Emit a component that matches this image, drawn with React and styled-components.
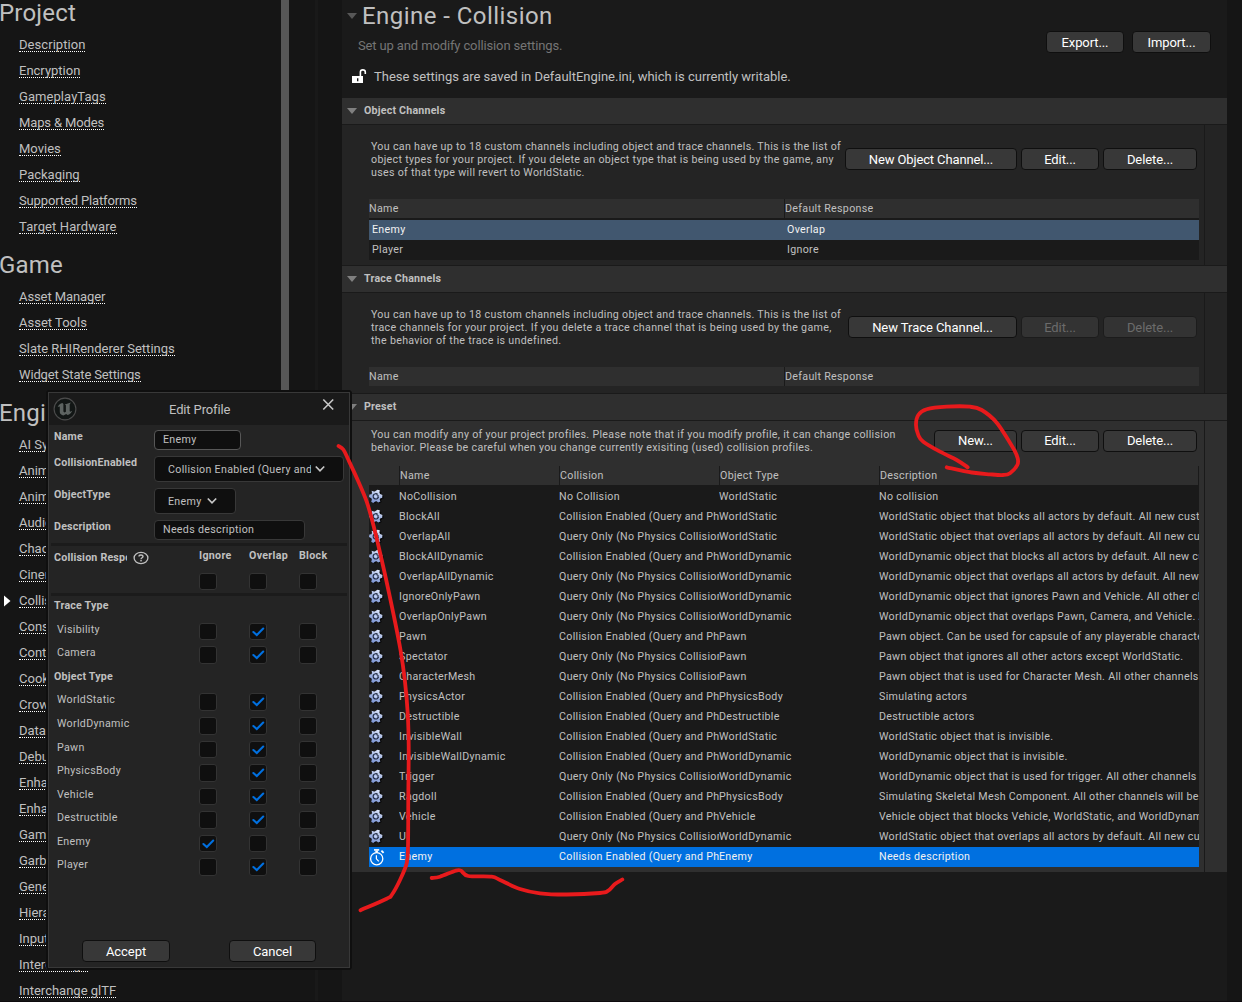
import React from "react";
import styled, { createGlobalStyle, css } from "styled-components";

const Global = createGlobalStyle`
  * { box-sizing: border-box; }
  body {
    margin: 0;
    background: #151515;
    color: #c0c0c0;
    font-family: Roboto, "Liberation Sans", sans-serif;
    font-size: 11px;
    line-height: 13px;
    overflow: hidden;
  }
`;

const regular = css`
  font-size: 13px;
  line-height: 15px;
  letter-spacing: ${(p) => p.$track || 0}px;
`;
const small = css`
  font-size: 10.67px;
  line-height: 13px;
  letter-spacing: 0.31px;
`;
const smallBold = css`
  font-size: 10.67px;
  line-height: 13px;
  letter-spacing: 0.2px;
  font-weight: 700;
`;
const heading = css`
  font-size: 24px;
  line-height: 28px;
  font-weight: 400;
`;

/* ---------- shell ---------- */
const Page = styled.div`
  position: relative;
  display: flex;
  width: 1242px;
  height: 1002px;
  overflow: hidden;
  border-bottom: 1px solid #0e0b0e;
`;
const Sidebar = styled.nav`
  display: flex;
  width: 318px;
  flex: none;
  border-right: 3px solid #191919;
`;
const SideList = styled.div`
  width: 281px;
  height: 1001px;
  overflow: hidden;
`;
const ScrollThumb = styled.div`
  width: 8px;
  height: 420px;
  background: #575757;
`;
const SideHeading = styled.h2`
  ${heading}
  height: 44px;
  margin: ${(p) => (p.$first ? "-12px" : "0")} 0 0 -1px;
  padding-top: 11px;
  letter-spacing: 0.2px;
`;
const SideItem = styled.div`
  display: flex;
  height: 26px;
  padding: 5px 0 0 19px;
`;
const SideLink = styled.a`
  ${regular}
  height: 15px;
  white-space: nowrap;
  border-bottom: 1px dotted #fff;
`;
const Pointer = styled.svg`
  width: 7px;
  height: 12px;
  margin: 2px 8px 0 -15px;
`;

/* ---------- main ---------- */
const Main = styled.main`
  width: 885px;
  margin-left: 24px;
  background: #1a1a1a;
`;
const MainHead = styled.header`
  display: flex;
  height: 98px;
  padding-right: 16px;
`;
const HeadText = styled.div`
  flex: 1;
`;
const TitleRow = styled.div`
  display: flex;
  align-items: flex-start;
  padding: 2px 0 0 5px;
`;
const Title = styled.h1`
  ${heading}
  margin: 0 0 0 5px;
  letter-spacing: 0.45px;
`;
const Arrow = styled.svg`
  width: 10px;
  height: 6px;
  flex: none;
  margin-top: ${(p) => p.$top}px;
`;
const Subtitle = styled.p`
  ${regular}
  margin: 8px 0 0 16px;
  color: #757575;
`;
const SavedRow = styled.div`
  ${regular}
  display: flex;
  align-items: flex-start;
  gap: 7px;
  padding: 16px 0 0 10px;
`;
const HeadButtons = styled.div`
  display: flex;
  gap: 8px;
  padding-top: 31px;
`;
const Button = styled.button`
  ${regular}
  width: ${(p) => p.$w}px;
  height: 22px;
  padding: 0 0 ${(p) => (p.$lift ? 2 : 0)}px;
  font-family: inherit;
  text-align: center;
  color: ${(p) => (p.$off ? "#6b6b6b" : "#fff")};
  background: ${(p) => (p.$off ? "#333" : "#383838")};
  border: 1px solid ${(p) => (p.$off ? "#1c1c1c" : "#0f0f0f")};
  border-radius: 4px;
`;

const SectionBar = styled.div`
  display: flex;
  height: ${(p) => (p.$first ? 27 : 28)}px;
  padding-left: 5px;
  background: #2f2f2f;
  border-bottom: 1px solid #1a1a1a;
  border-top: ${(p) => (p.$first ? "none" : "1px solid #1a1a1a")};
`;
const SectionTitle = styled.h3`
  ${smallBold}
  margin: 6px 0 0 7px;
`;
const SectionBody = styled.div`
  display: flex;
  height: ${(p) => p.$h}px;
  background: ${(p) => (p.$light ? "#2f2f2f" : "#242424")};
`;
const SectionContent = styled.div`
  width: 863px;
  padding-left: 27px;
  border-right: 1px solid #1a1a1a;
`;
const Intro = styled.div`
  display: flex;
  align-items: flex-start;
  height: ${(p) => p.$h}px;
  padding: ${(p) => p.$top}px 7px 0 2px;
`;
const IntroText = styled.p`
  ${small}
  flex: 1 1 0;
  min-width: 0;
  margin: 0;
  white-space: pre;
`;
const IntroButtons = styled.div`
  display: flex;
  flex: none;
  gap: 4px;
  margin-top: ${(p) => p.$top}px;
`;

const Table = styled.div`
  width: 830px;
  background: #1a1a1a;
`;
const HeadRow = styled.div`
  display: flex;
  gap: ${(p) => p.$gap}px;
  height: 19px;
  margin-bottom: 2px;
  background: ${(p) => (p.$gap ? "#1a1a1a" : "#2f2f2f")};
`;
const HeadCell = styled.div`
  ${small}
  flex: ${(p) => (p.$w ? `0 0 ${p.$w}px` : "1")};
  padding-top: 3px;
  background: #2f2f2f;
  ${(p) => p.$line && "border-left: 1px solid #1a1a1a;"}
  ${(p) => p.$last && "border-right: 1px solid #1a1a1a;"}
`;
const Row = styled.div`
  display: flex;
  height: 20px;
  color: ${(p) => (p.$bg ? "#f2f2f2" : "#c0c0c0")};
  background: ${(p) => p.$bg || "#1a1a1a"};
`;
const Cell = styled.div`
  ${small}
  flex: 0 0 ${(p) => p.$w}px;
  padding: 3px 0 0 ${(p) => p.$indent || 0}px;
  overflow: hidden;
  white-space: nowrap;
`;
const IconCell = styled.div`
  width: 30px;
  flex: none;
`;

/* ---------- dialog ---------- */
const Dialog = styled.section`
  position: absolute;
  left: 46px;
  top: 390px;
  width: 306px;
  height: 580px;
  padding: 1px;
  border: 1px solid #0f0f0f;
  background: #0f0f0f;
  border-radius: 3px;
`;
const DialogFrame = styled.div`
  display: flex;
  flex-direction: column;
  width: 302px;
  height: 576px;
  border: 1px solid #383838;
  background: #242424;
`;
const DialogTitle = styled.div`
  display: grid;
  grid-template-columns: 24px 1fr 13px;
  height: 32px;
  padding: 4px 14px 0 4px;
  background: #1a1a1a;
`;
const DialogName = styled.div`
  ${regular}
  padding: 5px 0 0 92px;
`;
const Form = styled.div`
  display: flex;
  flex-direction: column;
  gap: 6px;
  padding: 5px 0 3px 5px;
`;
const Field = styled.div`
  display: flex;
  align-items: flex-start;
`;
const Label = styled.div`
  ${smallBold}
  width: ${(p) => p.$w || 100}px;
  overflow: hidden;
  white-space: nowrap;
`;
const Input = styled.div`
  ${small}
  width: ${(p) => p.$w}px;
  height: 20px;
  padding: 2px 8px;
  background: #0f0f0f;
  border: 1px solid ${(p) => (p.$focus ? "#575757" : "#383838")};
  border-radius: 4px;
`;
const Combo = styled.div`
  ${small}
  display: flex;
  align-items: flex-start;
  gap: 4px;
  width: ${(p) => p.$w}px;
  height: 26px;
  padding: 6px 0 0 13px;
  background: #0f0f0f;
  border: 1px solid #383838;
  border-radius: 4px;
  white-space: nowrap;
`;
const ComboText = styled.span`
  width: ${(p) => p.$w}px;
  overflow: hidden;
`;
const Separator = styled.hr`
  width: 296px;
  height: 3px;
  margin: 0 2px;
  border: 0;
  background: #1b1b1b;
  flex: none;
`;
const Responses = styled.div`
  display: grid;
  grid-template-columns: 145px 50px 50px 50px;
  grid-template-rows: 27px 20px;
  height: 47px;
  padding-left: 5px;
`;
const ResponseLabel = styled.div`
  display: flex;
  gap: 6px;
  padding-top: 5px;
`;
const ColumnName = styled.div`
  ${smallBold}
  letter-spacing: 0.3px;
  padding-top: 3px;
`;
const Group = styled.div`
  ${smallBold}
  height: 23px;
  padding: ${(p) => p.$top}px 0 0 5px;
`;
const ChannelRow = styled.div`
  display: grid;
  grid-template-columns: 142px 50px 50px 50px;
  height: ${(p) => p.$h}px;
  padding: 4px 0 0 8px;
`;
const ChannelName = styled.div`
  ${small}
`;
const Check = styled.div`
  width: 18px;
  height: ${(p) => p.$h}px;
  background: #0f0f0f;
  border: 1px solid #333;
  border-radius: 3px;
`;
const DialogButtons = styled.div`
  display: flex;
  gap: 59px;
  margin-top: auto;
  padding: 0 0 5px 33px;
`;
const Ink = styled.svg`
  position: absolute;
  left: 0;
  top: 0;
  pointer-events: none;
`;
const Glyph = styled.svg`
  display: block;
  flex: none;
  margin-top: ${(p) => p.$top || 0}px;
`;

/* ---------- icons ---------- */
const DownArrow = ({ top, color = "#808080" }) => (
  <Arrow $top={top} viewBox="0 0 10 6">
    <path d="M0 0H10L5 6Z" fill={color} />
  </Arrow>
);

const LockIcon = () => (
  <Glyph width="15" height="15" viewBox="0 0 15 15">
    <path fillRule="evenodd" fill="#fff" d="M0 7H11V14H0Z M5 9.2V12.2H6.4V9.2Z" />
    <path d="M8.4 7.4V3Q8.4 0.9 10.8 0.9T13.3 3V5" fill="none" stroke="#fff" strokeWidth="1.6" />
  </Glyph>
);

const TEETH = [0, 60, 120, 180, 240, 300];
const GearIcon = () => (
  <Glyph width="16" height="18" viewBox="0 0 16 18">
    <defs>
      <linearGradient id="steel" gradientUnits="userSpaceOnUse" x1="3" y1="-6" x2="-2" y2="6">
        <stop offset="0" stopColor="#dfe8fc" />
        <stop offset="0.5" stopColor="#a3b6e2" />
        <stop offset="1" stopColor="#8098d6" />
      </linearGradient>
    </defs>
    <g transform="translate(8.2 10.4)" fill="#080808">
      {TEETH.map((a) => (
        <rect key={a} x="-1.5" y="-6.4" width="3" height="4" rx="0.6" transform={`rotate(${a + 28})`} />
      ))}
      <circle r="4.9" />
    </g>
    <g transform="translate(6.8 9.4)">
      <path
        fill="url(#steel)"
        d="M-4.2 -5.6L-1.9 -4.9L-1 -4.9L1.6 -6.7L4 -6.2L3.6 -3.6L4.4 -2.4L6.6 -1.4L6.4 1.3L4.4 2L3.9 3.2L4.6 5.2L2.4 6.2L0.8 4.9L-0.6 5L-2.6 6.6L-4.6 5.4L-3.9 3L-4.5 1.8L-6.8 0.6L-6.4 -1.8L-4.3 -2.2L-3.8 -3.3Z"
      />
      <path d="M1.9 -2A2.7 2.7 0 1 0 2.7 0.4" fill="none" stroke="#1f2940" strokeWidth="1.1" />
      <path d="M0.6 -1.6L2.6 -0.8L1.8 1.2" fill="none" stroke="#1f2940" strokeWidth="0.9" />
      <circle cx="-0.2" cy="0.2" r="1.2" fill="#c4d2f5" />
    </g>
  </Glyph>
);

const StopwatchIcon = () => (
  <Glyph width="17" height="20" viewBox="0 0 17 20">
    <g fill="none" stroke="#fff">
      <circle cx="7.7" cy="11.7" r="6.1" strokeWidth="1.3" />
      <path d="M7.4 8.2V11.8L9.8 14.4" strokeWidth="1.2" />
      <path d="M5 2.9H10.2" strokeWidth="1.6" />
      <path d="M7.6 3.5V5.4" strokeWidth="2.6" />
      <path d="M12.4 3.6L14.6 5.8" strokeWidth="1.9" />
    </g>
  </Glyph>
);

const UnrealLogo = () => (
  <Glyph width="24" height="24" viewBox="0 0 24 24">
    <circle cx="12" cy="12" r="10.9" fill="#121615" stroke="#4c4c4c" strokeWidth="1.1" />
    <path
      fill="#5d6361"
      d="M4.6 10.3C5.4 8.2 7.2 6.6 9.4 6.1L10.4 7V14.6L11.4 15.6L12.9 14.8V8.3L11.8 7.6L15.6 6.3L17.8 5.6L16.7 7.6V14.2L17.4 14.8L19.2 13.7C18.4 16 16.6 17.6 14.6 18.1L13.2 16.9L10.4 18.4C8.4 18 7 16.9 6.8 15.2V9.7C6 9.2 5.3 9.6 4.6 10.3Z"
    />
  </Glyph>
);

const CloseIcon = () => (
  <Glyph $top={1} width="13" height="13" viewBox="0 0 13 13">
    <path d="M1.3 1.5L11.2 11.5M11.2 1.5L1.3 11.5" stroke="#c8c8c8" strokeWidth="1.6" fill="none" />
  </Glyph>
);

const Chevron = () => (
  <Glyph $top={2} width="11" height="8" viewBox="0 0 11 8">
    <path d="M0.8 1.5L5 5.8L9.2 1.5" stroke="#c8c8c8" strokeWidth="1.7" fill="none" />
  </Glyph>
);

const HelpIcon = () => (
  <Glyph width="16" height="14" viewBox="0 0 16 14">
    <ellipse cx="8" cy="7" rx="6.9" ry="5.6" fill="none" stroke="#c0c0c0" strokeWidth="1.3" />
    <path d="M6 5.6C6 3.4 10 3.4 10 5.5C10 6.8 8 6.7 8 8.2" fill="none" stroke="#c0c0c0" strokeWidth="1.4" />
    <rect x="7.3" y="9" width="1.5" height="1.4" fill="#c0c0c0" />
  </Glyph>
);

const CheckBox = ({ on, h }) => (
  <Check $h={h}>
    {on && (
      <Glyph width="16" height="15" viewBox="0 0 16 15">
        <path d="M3.4 8L6.8 11L13.2 4.6" fill="none" stroke="#0070e0" strokeWidth="2.1" strokeLinecap="round" />
      </Glyph>
    )}
  </Check>
);

/* ---------- data ---------- */
const MENU = [
  ["Project", ["Description", "Encryption", "GameplayTags", "Maps & Modes", "Movies", "Packaging", "Supported Platforms", "Target Hardware"]],
  ["Game", ["Asset Manager", "Asset Tools", "Slate RHIRenderer Settings", "Widget State Settings"]],
  ["Engine", [
    "AI System", "Animation", "Animation Modifiers", "Audio", "Chaos Solver", "Cinematic Camera", "Collision",
    "Console", "Control Rig", "Cooker", "Crowd Manager", "Data Driven CVars", "Debug Camera Controller",
    "Enhanced Input", "Enhanced Input (Editor Only)", "Gameplay Debugger", "Garbage Collection",
    "General Settings", "Hierarchical LOD", "Input", "Interchange", "Interchange glTF",
  ]],
];
const TRACKING = {
  Description: 0.06,
  GameplayTags: 0.07,
  "Maps & Modes": -0.14,
  "Supported Platforms": -0.14,
  "Target Hardware": 0.1,
  "Asset Manager": -0.1,
  "Widget State Settings": -0.14,
};

const CE = "Collision Enabled (Query and Physics)";
const QO = "Query Only (No Physics Collision)";
const PRESETS = [
  ["NoCollision", "No Collision", "WorldStatic", "No collision"],
  ["BlockAll", CE, "WorldStatic", "WorldStatic object that blocks all actors by default. All new custom channels"],
  ["OverlapAll", QO, "WorldStatic", "WorldStatic object that overlaps all actors by default. All new custom channels"],
  ["BlockAllDynamic", CE, "WorldDynamic", "WorldDynamic object that blocks all actors by default. All new custom channels"],
  ["OverlapAllDynamic", QO, "WorldDynamic", "WorldDynamic object that overlaps all actors by default. All new custom channels"],
  ["IgnoreOnlyPawn", QO, "WorldDynamic", "WorldDynamic object that ignores Pawn and Vehicle. All other channels"],
  ["OverlapOnlyPawn", QO, "WorldDynamic", "WorldDynamic object that overlaps Pawn, Camera, and Vehicle. All other channels"],
  ["Pawn", CE, "Pawn", "Pawn object. Can be used for capsule of any playerable characters or AI."],
  ["Spectator", QO, "Pawn", "Pawn object that ignores all other actors except WorldStatic."],
  ["CharacterMesh", QO, "Pawn", "Pawn object that is used for Character Mesh. All other channels will be set"],
  ["PhysicsActor", CE, "PhysicsBody", "Simulating actors"],
  ["Destructible", CE, "Destructible", "Destructible actors"],
  ["InvisibleWall", CE, "WorldStatic", "WorldStatic object that is invisible."],
  ["InvisibleWallDynamic", CE, "WorldDynamic", "WorldDynamic object that is invisible."],
  ["Trigger", QO, "WorldDynamic", "WorldDynamic object that is used for trigger. All other channels will be set"],
  ["Ragdoll", CE, "PhysicsBody", "Simulating Skeletal Mesh Component. All other channels will be set"],
  ["Vehicle", CE, "Vehicle", "Vehicle object that blocks Vehicle, WorldStatic, and WorldDynamic."],
  ["UI", QO, "WorldDynamic", "WorldStatic object that overlaps all actors by default. All new custom channels"],
  ["Enemy", CE, "Enemy", "Needs description"],
];

// name, checked column, row height, box height
const TRACE = [
  ["Visibility", 1, 23, 17],
  ["Camera", 1, 24, 18],
];
const OBJECTS = [
  ["WorldStatic", 1, 24, 18],
  ["WorldDynamic", 1, 24, 18],
  ["Pawn", 1, 23, 17],
  ["PhysicsBody", 1, 24, 18],
  ["Vehicle", 1, 23, 17],
  ["Destructible", 1, 24, 18],
  ["Enemy", 0, 23, 17],
  ["Player", 1, 24, 18],
];

const STROKES = [
  [[946.7, 467.3], [971.7, 472.5], [990, 474.3], [1003, 475], [1010, 473.3], [1017.3, 465], [1017.7, 458.3], [1013.3, 448.3], [996.7, 422.7], [981.7, 410], [970, 406.7], [946.7, 406.7], [926.7, 409.3], [918.3, 415], [916, 425], [918.3, 435], [923.3, 441.7], [940, 451.7], [956.7, 460], [967.7, 467.3]],
  [[338.5, 446], [343.3, 449.5], [348.5, 460], [357.7, 480], [366.7, 501.7], [373.8, 526.7], [384, 570], [394, 616.7], [400.5, 650], [404.8, 680], [407.7, 713], [408.7, 746.7], [408.3, 796.7], [408, 846.7], [406.7, 863.3], [400, 880], [391.7, 895], [386.7, 898.7], [360.5, 910.3]],
  [[431.7, 878], [440, 876.7], [456, 870.6], [461, 870.8], [468.3, 876], [491.7, 876.7], [500, 880], [520, 889], [540, 893.3], [566.7, 894.5], [600, 893], [608.3, 890.7], [615, 884], [622.3, 879.5]],
];

function smooth(pts) {
  let d = `M${pts[0][0]} ${pts[0][1]}`;
  for (let i = 0; i < pts.length - 1; i++) {
    const a = pts[i - 1] || pts[i];
    const b = pts[i];
    const c = pts[i + 1];
    const e = pts[i + 2] || c;
    d += `C${b[0] + (c[0] - a[0]) / 6} ${b[1] + (c[1] - a[1]) / 6} ${c[0] - (e[0] - b[0]) / 6} ${c[1] - (e[1] - b[1]) / 6} ${c[0]} ${c[1]}`;
  }
  return d;
}

/* ---------- parts ---------- */
const Section = ({ title, first, light, h, children }) => (
  <>
    <SectionBar $first={first}>
      <DownArrow top={10} />
      <SectionTitle>{title}</SectionTitle>
    </SectionBar>
    <SectionBody $h={h} $light={light}>
      <SectionContent>{children}</SectionContent>
    </SectionBody>
  </>
);

const ChannelTable = ({ rows }) => (
  <Table>
    <HeadRow $gap={1}>
      <HeadCell $w={415}>Name</HeadCell>
      <HeadCell>Default Response</HeadCell>
    </HeadRow>
    {rows.map(([name, response, bg]) => (
      <Row key={name} $bg={bg}>
        <Cell $w={415} $indent={3}>{name}</Cell>
        <Cell $w={415} $indent={3}>{response}</Cell>
      </Row>
    ))}
  </Table>
);

const Channels = ({ rows }) =>
  rows.map(([name, on, h, box]) => (
    <ChannelRow key={name} $h={h}>
      <ChannelName>{name}</ChannelName>
      {[0, 1, 2].map((c) => (
        <CheckBox key={c} on={c === on} h={box} />
      ))}
    </ChannelRow>
  ));

export default function App() {
  return (
    <Page>
      <Global />
      <Sidebar>
        <SideList>
          {MENU.map(([group, items], g) => (
            <React.Fragment key={group}>
              <SideHeading $first={g === 0}>{group}</SideHeading>
              {items.map((item) => (
                <SideItem key={item}>
                  {item === "Collision" && (
                    <Pointer viewBox="0 0 7 12">
                      <path d="M0 0.5L6.5 6L0 11.5Z" fill="#fff" />
                    </Pointer>
                  )}
                  <SideLink $track={TRACKING[item]}>{item}</SideLink>
                </SideItem>
              ))}
            </React.Fragment>
          ))}
        </SideList>
        <ScrollThumb />
      </Sidebar>

      <Main>
        <MainHead>
          <HeadText>
            <TitleRow>
              <DownArrow top={11} color="#575757" />
              <Title>Engine - Collision</Title>
            </TitleRow>
            <Subtitle $track={-0.13}>Set up and modify collision settings.</Subtitle>
            <SavedRow $track={-0.01}>
              <LockIcon />
              These settings are saved in DefaultEngine.ini, which is currently writable.
            </SavedRow>
          </HeadText>
          <HeadButtons>
            <Button $w={78} $track={-0.1}>Export...</Button>
            <Button $w={79} $track={-0.1}>Import...</Button>
          </HeadButtons>
        </MainHead>

        <Section title="Object Channels" first h={140}>
          <Intro $h={74} $top={15}>
            <IntroText>
              {"You can have up to 18 custom channels including object and trace channels. This is the list of\nobject types for your project. If you delete an object type that is being used by the game, any\nuses of that type will revert to WorldStatic."}
            </IntroText>
            <IntroButtons $top={8}>
              <Button $w={172} $track={-0.13}>New Object Channel...</Button>
              <Button $w={78} $track={-0.08}>Edit...</Button>
              <Button $w={94} $track={-0.08}>Delete...</Button>
            </IntroButtons>
          </Intro>
          <ChannelTable rows={[["Enemy", "Overlap", "#41576f"], ["Player", "Ignore"]]} />
        </Section>

        <Section title="Trace Channels" h={100}>
          <Intro $h={74} $top={15}>
            <IntroText>
              {"You can have up to 18 custom channels including object and trace channels. This is the list of\ntrace channels for your project. If you delete a trace channel that is being used by the game,\nthe behavior of the trace is undefined."}
            </IntroText>
            <IntroButtons $top={8}>
              <Button $w={169} $track={-0.05}>New Trace Channel...</Button>
              <Button $w={78} $track={-0.08} $off>Edit...</Button>
              <Button $w={94} $track={-0.08} $off>Delete...</Button>
            </IntroButtons>
          </Intro>
          <ChannelTable rows={[]} />
        </Section>

        <Section title="Preset" light h={451}>
          <Intro $h={45} $top={7}>
            <IntroText>
              {"You can modify any of your project profiles. Please note that if you modify profile, it can change collision\nbehavior. Please be careful when you change currently exisiting (used) collision profiles."}
            </IntroText>
            <IntroButtons $top={2}>
              <Button $w={83} $track={-0.08} $lift>New...</Button>
              <Button $w={78} $track={-0.08} $lift>Edit...</Button>
              <Button $w={94} $track={-0.08} $lift>Delete...</Button>
            </IntroButtons>
          </Intro>
          <Table>
            <HeadRow $gap={0}>
              <HeadCell $w={30} />
              <HeadCell $w={160} $line>Name</HeadCell>
              <HeadCell $w={160} $line>Collision</HeadCell>
              <HeadCell $w={160} $line>Object Type</HeadCell>
              <HeadCell $line $last>Description</HeadCell>
            </HeadRow>
            {PRESETS.map(([name, collision, type, text]) => (
              <Row key={name} $bg={name === "Enemy" ? "#0070e0" : undefined}>
                <IconCell>{name === "Enemy" ? <StopwatchIcon /> : <GearIcon />}</IconCell>
                <Cell $w={160}>{name}</Cell>
                <Cell $w={160}>{collision}</Cell>
                <Cell $w={160}>{type}</Cell>
                <Cell $w={320}>{text}</Cell>
              </Row>
            ))}
          </Table>
        </Section>
      </Main>

      <Dialog>
        <DialogFrame>
          <DialogTitle>
            <UnrealLogo />
            <DialogName $track={-0.13}>Edit Profile</DialogName>
            <CloseIcon />
          </DialogTitle>
          <Form>
            <Field>
              <Label>Name</Label>
              <Input $w={87} $focus>Enemy</Input>
            </Field>
            <Field>
              <Label>CollisionEnabled</Label>
              <Combo $w={190}>
                <ComboText $w={143}>{CE}</ComboText>
                <Chevron />
              </Combo>
            </Field>
            <Field>
              <Label>ObjectType</Label>
              <Combo $w={82}>
                <ComboText $w={35}>Enemy</ComboText>
                <Chevron />
              </Combo>
            </Field>
            <Field>
              <Label>Description</Label>
              <Input $w={151}>Needs description</Input>
            </Field>
          </Form>
          <Separator />
          <Responses>
            <ResponseLabel>
              <Label $w={73}>Collision Responses</Label>
              <HelpIcon />
            </ResponseLabel>
            <ColumnName>Ignore</ColumnName>
            <ColumnName>Overlap</ColumnName>
            <ColumnName>Block</ColumnName>
            <span />
            <CheckBox h={17} />
            <CheckBox h={17} />
            <CheckBox h={17} />
          </Responses>
          <Separator />
          <Group $top={3}>Trace Type</Group>
          <Channels rows={TRACE} />
          <Group $top={4}>Object Type</Group>
          <Channels rows={OBJECTS} />
          <DialogButtons>
            <Button $w={88} $track={-0.05}>Accept</Button>
            <Button $w={87} $track={-0.1}>Cancel</Button>
          </DialogButtons>
        </DialogFrame>
      </Dialog>

      <Ink width="1242" height="1002" viewBox="0 0 1242 1002">
        {STROKES.map((pts, i) => (
          <path key={i} d={smooth(pts)} fill="none" stroke="#e81a1c" strokeWidth="3.8" strokeLinecap="round" strokeLinejoin="round" />
        ))}
      </Ink>
    </Page>
  );
}
